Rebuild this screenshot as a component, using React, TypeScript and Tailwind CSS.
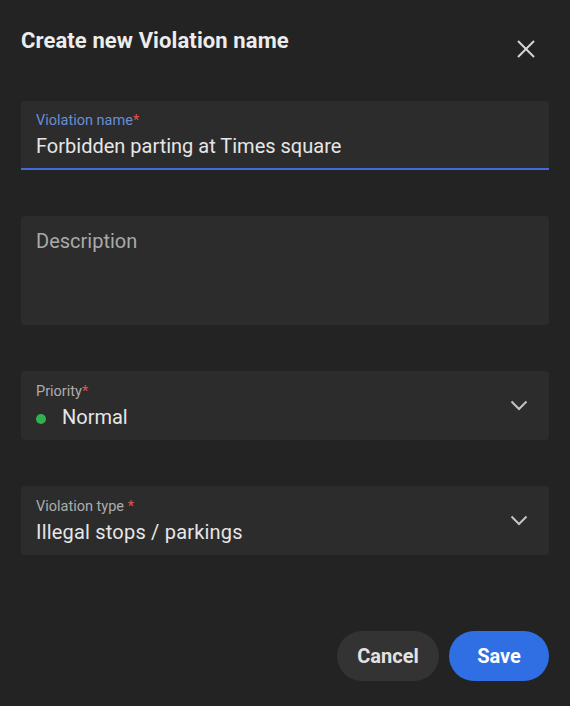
function Req() {
  return <span className="text-[#e0534f]">*</span>;
}

function CloseIcon() {
  return (
    <svg width="18" height="18" viewBox="0 0 18 18" fill="none" stroke="currentColor" strokeWidth="2">
      <line x1="1" y1="1" x2="17" y2="17" />
      <line x1="17" y1="1" x2="1" y2="17" />
    </svg>
  );
}

function Chevron() {
  return (
    <svg width="18" height="11" viewBox="0 0 18 11" fill="none" stroke="currentColor" strokeWidth="2" className="text-[#c4c4c4]">
      <polyline points="1.5,1.5 9,9 16.5,1.5" />
    </svg>
  );
}

export default function App() {
  return (
    <div
      className="min-h-[706px] w-full bg-[#232323] px-[21px] text-[#e4e4e4]"
      style={{ fontFamily: "Roboto, 'Liberation Sans', sans-serif" }}
    >
      {/* Header */}
      <div className="flex h-[101px] items-start justify-between pt-[27px]">
        <h1 className="text-[22px] font-bold leading-[28px] tracking-[0.1px] text-[#ececec]">
          Create new Violation name
        </h1>
        <button className="mr-[14px] mt-[13px] text-[#d6d6d6]">
          <CloseIcon />
        </button>
      </div>

      {/* Violation name */}
      <div className="flex h-[69px] flex-col rounded-t-[4px] border-b-2 border-[#3f6fd6] bg-[#2c2c2c] px-[15px] pt-[12px]">
        <label className="text-[14.5px] leading-[16px] text-[#6a8ed6]">
          Violation name<Req />
        </label>
        <div className="mt-[5px] text-[20px] leading-[24px] text-[#e6e6e6]">
          Forbidden parting at Times square
        </div>
      </div>

      {/* Description */}
      <div className="mt-[46px] h-[109px] rounded-[4px] bg-[#2c2c2c] px-[15px] pt-[13px]">
        <div className="text-[20px] leading-[24px] text-[#a9a9a9]">Description</div>
      </div>

      {/* Priority */}
      <div className="mt-[46px] flex h-[69px] items-center justify-between rounded-[4px] bg-[#2c2c2c] pl-[15px] pr-[21px]">
        <div className="flex h-full flex-col pt-[13px]">
          <label className="text-[14.5px] leading-[16px] text-[#acacac]">
            Priority<Req />
          </label>
          <div className="mt-[5px] flex items-center text-[20px] leading-[24px] text-[#e6e6e6]">
            <span className="mr-[16px] h-[10px] w-[10px] translate-y-[2px] rounded-full bg-[#33b14f]" />
            Normal
          </div>
        </div>
        <Chevron />
      </div>

      {/* Violation type */}
      <div className="mt-[46px] flex h-[69px] items-center justify-between rounded-[4px] bg-[#2c2c2c] pl-[15px] pr-[21px]">
        <div className="flex h-full flex-col pt-[13px]">
          <label className="text-[14.5px] leading-[16px] text-[#acacac]">
            Violation type <Req />
          </label>
          <div className="mt-[5px] text-[20px] leading-[24px] tracking-[0.2px] text-[#e6e6e6]">
            Illegal stops / parkings
          </div>
        </div>
        <Chevron />
      </div>

      {/* Actions */}
      <div className="mt-[76px] flex justify-end gap-[10px]">
        <button className="h-[50px] w-[102px] rounded-full bg-[#333333] text-[20px] font-bold text-[#e2e2e2]">
          Cancel
        </button>
        <button className="h-[50px] w-[100px] rounded-full bg-[#2f6ee3] text-[20px] font-bold text-white">
          Save
        </button>
      </div>
    </div>
  );
}
